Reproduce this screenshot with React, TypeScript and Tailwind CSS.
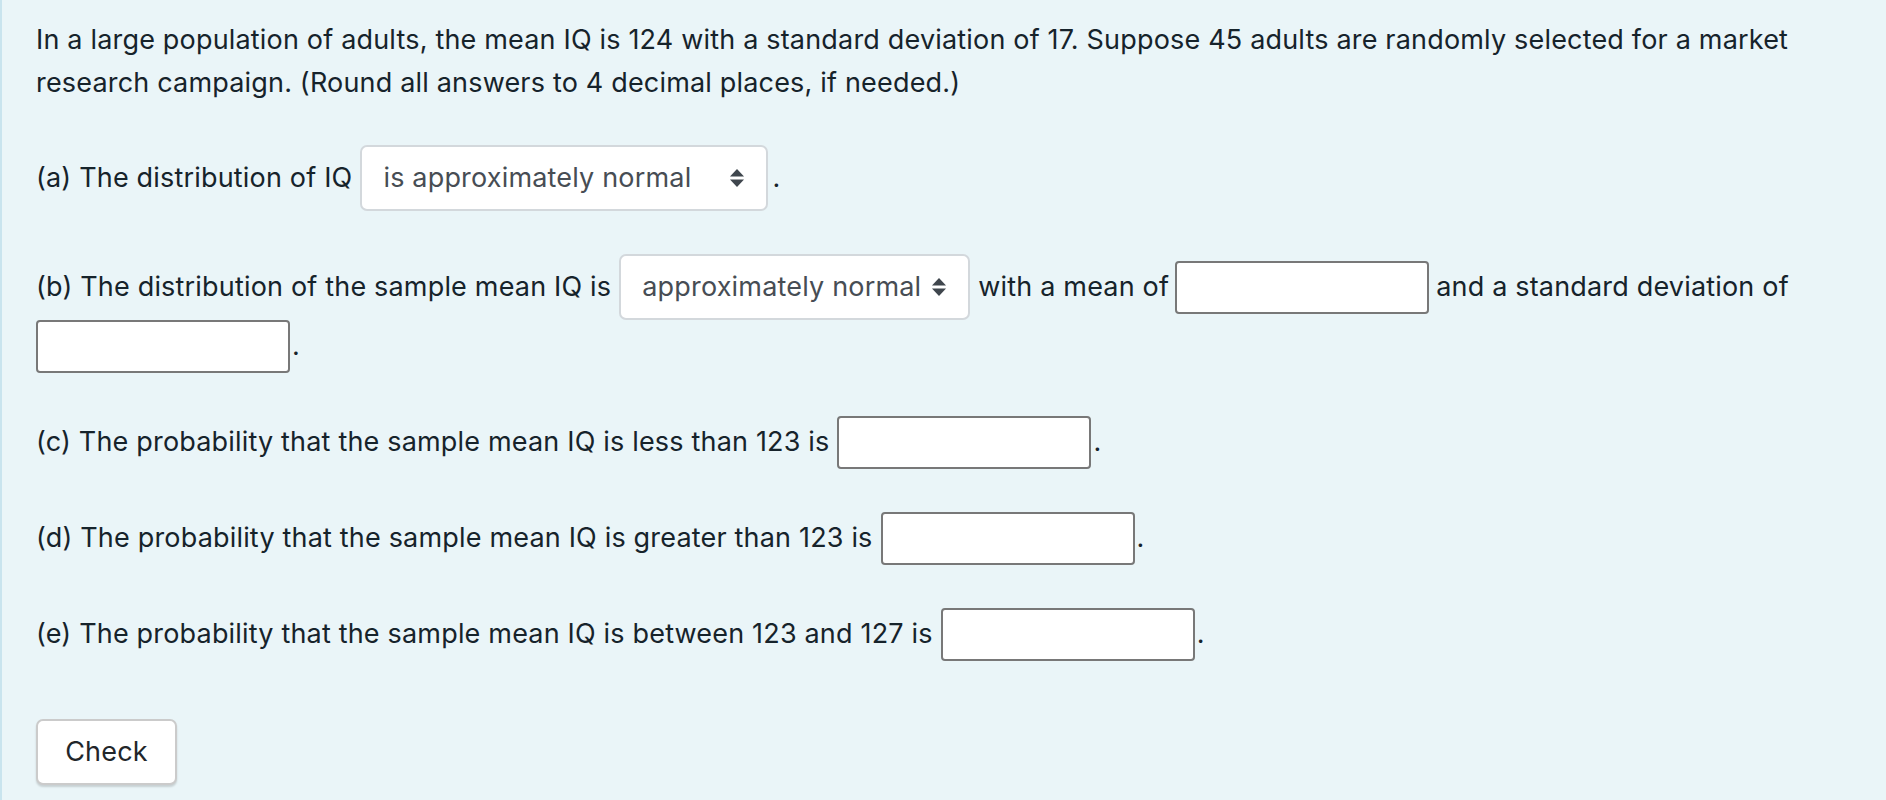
import React from 'react';

const SortIcon = () => (
  <svg width="14" height="18" viewBox="0 0 14 18" className="shrink-0">
    <path d="M7 0 L14 7.5 H0 Z" fill="#3f464d" />
    <path d="M0 10.5 H14 L7 18 Z" fill="#3f464d" />
  </svg>
);

const FakeSelect = ({ label, width }: { label: string; width?: string }) => (
  <div
    className={`h-[66px] flex items-center bg-white border-2 border-[#d3d8dc] rounded-[7px] pl-[21px] pr-[22px] text-[#474d54] ${width ?? ''}`}
  >
    <span className="flex-1 whitespace-nowrap">{label}</span>
    <span className="ml-[11px]">
      <SortIcon />
    </span>
  </div>
);

const Blank = () => (
  <div className="w-[254px] h-[53px] bg-white border-2 border-[#787878] rounded-[4px]" />
);

export default function App() {
  return (
    <div
      className="min-h-[800px] bg-[#eaf5f8] border-l-2 border-[#c9e4ee] pl-[34px] pr-[60px] pt-[18px] text-[27px] tracking-[0.18px] text-[#16232b]"
      style={{ fontFamily: 'Inter, "Liberation Sans", Arial, sans-serif' }}
    >
      <p className="leading-[43px]">
        In a large population of adults, the mean IQ is 124 with a standard deviation of 17. Suppose 45 adults are
        randomly selected for a market research campaign. (Round all answers to 4 decimal places, if needed.)
      </p>

      <div className="mt-[41px] flex items-center">
        <span>(a) The distribution of IQ</span>
        <div className="ml-[8px]">
          <FakeSelect label="is approximately normal" width="w-[408px]" />
        </div>
        <span className="ml-[4px]">.</span>
      </div>

      <div className="mt-[43px] flex flex-wrap items-center">
        <span>(b) The distribution of the sample mean IQ is</span>
        <div className="ml-[8px]">
          <FakeSelect label="approximately normal" />
        </div>
        <span className="ml-[8px]">with a mean of</span>
        <div className="ml-[6px]">
          <Blank />
        </div>
        <span className="ml-[7px]">and a standard deviation of</span>
        <div className="flex items-center">
          <Blank />
          <span className="ml-[2px]">.</span>
        </div>
      </div>

      <div className="mt-[43px] flex items-center">
        <span>(c) The probability that the sample mean IQ is less than 123 is</span>
        <div className="ml-[8px]">
          <Blank />
        </div>
        <span className="ml-[2px]">.</span>
      </div>

      <div className="mt-[43px] flex items-center">
        <span>(d) The probability that the sample mean IQ is greater than 123 is</span>
        <div className="ml-[8px]">
          <Blank />
        </div>
        <span className="ml-[2px]">.</span>
      </div>

      <div className="mt-[43px] flex items-center">
        <span>(e) The probability that the sample mean IQ is between 123 and 127 is</span>
        <div className="ml-[8px]">
          <Blank />
        </div>
        <span className="ml-[2px]">.</span>
      </div>

      <button className="mt-[58px] w-[141px] h-[66px] bg-white border-2 border-[#cbcbcb] rounded-[7px] shadow-[0_2px_2px_rgba(0,0,0,0.15)] text-[#22262a]">
        Check
      </button>
    </div>
  );
}
